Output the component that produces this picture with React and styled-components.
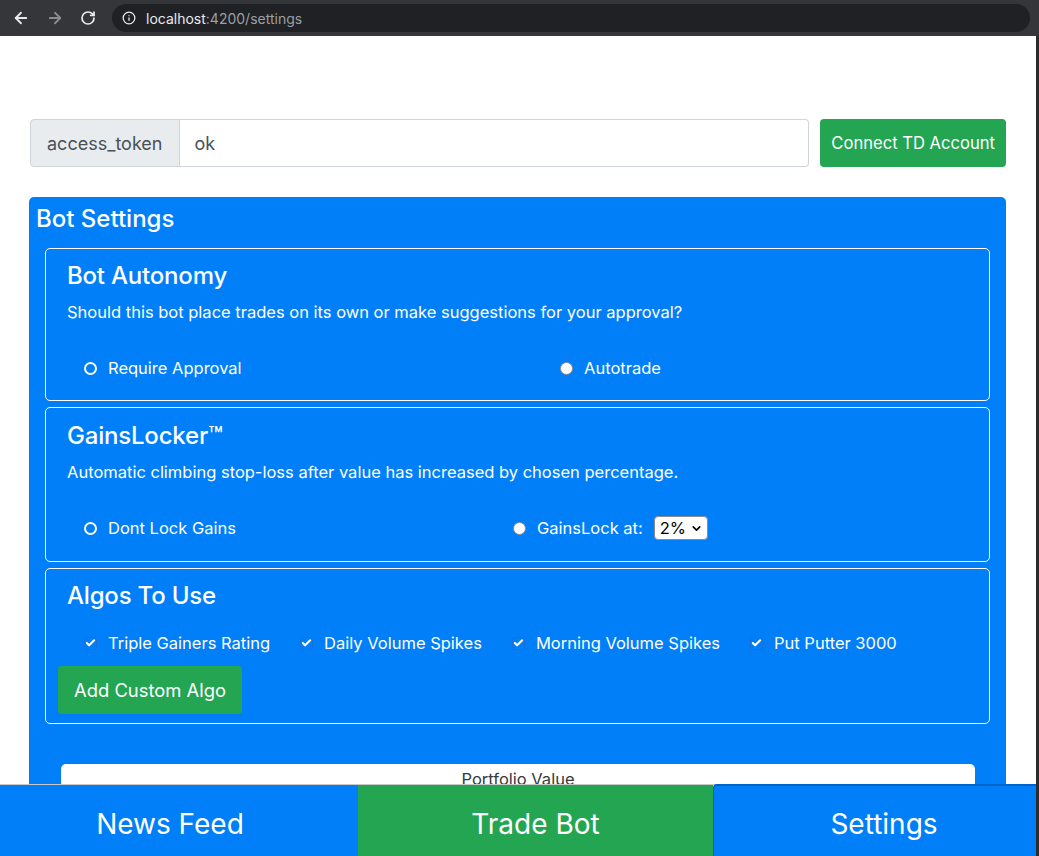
import React from 'react';
import styled, { createGlobalStyle } from 'styled-components';
import { ArrowLeft, ArrowRight, RotateCw, Info, ChevronDown, Check } from 'lucide-react';

const BLUE = '#007ff9';
const GREEN = '#23a552';

const GlobalStyle = createGlobalStyle`
  html, body {
    margin: 0;
    padding: 0;
    height: 100%;
    overflow: hidden;
  }
  body {
    font-family: Inter, "Helvetica Neue", Arial, sans-serif;
    color: #212529;
    background: #fff;
  }
  #root { height: 100%; }
`;

// browser chrome
const Window = styled.div`
  height: 100vh;
  display: flex;
  flex-direction: column;
`;

const Chrome = styled.div`
  height: 36px;
  flex: none;
  background: #35363a;
  display: flex;
  align-items: center;
  padding-left: 12px;
  gap: 16px;
`;

const NavIcon = styled.span`
  display: flex;
  color: ${p => (p.$dim ? '#8a8b8e' : '#e8eaed')};
`;

const UrlPill = styled.div`
  flex: 1;
  height: 28px;
  margin-right: 9px;
  border-radius: 14px;
  background: #202124;
  display: flex;
  align-items: center;
  padding-left: 10px;
  gap: 10px;
  font-size: 14px;
  color: #9aa0a6;
`;

const Host = styled.span`
  color: #e8eaed;
`;

const Viewport = styled.div`
  flex: 1;
  display: flex;
  min-height: 0;
`;

const Page = styled.div`
  flex: 1;
  position: relative;
  overflow: hidden;
`;

const Edge = styled.div`
  width: 3px;
  background: #2b2b2d;
`;

const Container = styled.div`
  padding: 83px 30px 0 29px;
`;

// token input
const InputGroup = styled.div`
  display: flex;
  height: 48px;
  margin-left: 1px;
  font-size: 18px;
`;

const Prepend = styled.div`
  display: flex;
  align-items: center;
  padding: 0 16px;
  background: #e9ecef;
  border: 1px solid #ced4da;
  border-radius: 4px 0 0 4px;
  color: #495057;
`;

const TokenInput = styled.div`
  flex: 1;
  display: flex;
  align-items: center;
  padding: 0 15px;
  border: 1px solid #ced4da;
  border-left: 0;
  border-radius: 0 4px 4px 0;
  color: #495057;
`;

const Button = styled.button`
  border: 0;
  border-radius: 4px;
  background: ${GREEN};
  color: #fff;
  font-family: inherit;
  font-size: ${p => p.$size || 16.6}px;
  padding: 0 ${p => p.$pad || 11}px;
  height: 48px;
  margin-left: ${p => p.$ml || 0}px;
  margin-top: ${p => p.$mt || 0}px;
  align-self: flex-start;
`;

// settings card
const BlueCard = styled.div`
  margin-top: 30px;
  background: ${BLUE};
  border-radius: 5px;
  color: #fff;
  padding-bottom: 40px;
`;

const CardTitle = styled.h3`
  margin: 0;
  padding: 7px 7px 15px;
  font-size: 24px;
  line-height: 29px;
  font-weight: 500;
`;

const CardBody = styled.div`
  padding: 0 16px;
  display: flex;
  flex-direction: column;
  gap: 6px;
`;

const Panel = styled.div`
  border: 1px solid #fff;
  border-radius: 5px;
  padding: ${p => p.$pt || 12}px 12px ${p => p.$pb || 12}px;
  display: flex;
  flex-direction: column;
`;

const PanelTitle = styled.h4`
  margin: 0 10px 10px 9px;
  font-size: 24px;
  line-height: 29px;
  font-weight: 500;
  letter-spacing: -0.2px;
`;

const PanelText = styled.p`
  margin: 0 10px 0 9px;
  font-size: 16.5px;
  line-height: 24px;
`;

const ChoiceRow = styled.div`
  margin: 32px 0 8px;
  padding-left: 26px;
  display: grid;
  grid-template-columns: 351px 351px;
  height: 24px;
`;

const Choice = styled.label`
  display: flex;
  align-items: center;
  justify-content: ${p => (p.$center ? 'center' : 'flex-start')};
  gap: 11px;
  font-size: 16.5px;
`;

const Radio = styled.span`
  width: 13px;
  height: 13px;
  box-sizing: border-box;
  border-radius: 50%;
  flex: none;
  ${p =>
    p.$ring
      ? `border: 2px solid #fff; background: transparent;`
      : `border: 1px solid #8d8d8d; background: #fff;`}
`;

const SelectBox = styled.span`
  display: inline-flex;
  align-items: center;
  gap: 4px;
  height: 24px;
  box-sizing: border-box;
  padding: 0 4px 0 5px;
  background: #fff;
  color: #000;
  border: 1px solid #8d8d8d;
  border-radius: 4px;
  font-size: 16.5px;
`;

const CheckRow = styled.div`
  margin-top: 11px;
  padding-left: 26px;
  display: flex;
  gap: 30px;
  height: 24px;
`;

const CheckItem = styled.label`
  display: flex;
  align-items: center;
  gap: 11px;
  font-size: 16.5px;
`;

const CheckBox = styled.span`
  width: 13px;
  height: 13px;
  box-sizing: border-box;
  border-radius: 3px;
  border: 1px solid #1a70d8;
  background: ${BLUE};
  display: flex;
  align-items: center;
  justify-content: center;
  color: #fff;
`;

const WhiteCard = styled.div`
  margin: 34px 15px 0 16px;
  background: #fff;
  border-radius: 5px;
  color: #343a40;
  text-align: center;
  padding-top: 3px;
  font-size: 16.5px;
  line-height: 24px;
  height: 200px;
`;

// bottom nav
const BottomNav = styled.nav`
  position: absolute;
  left: 0;
  right: 0;
  bottom: 0;
  height: 71px;
  display: grid;
  grid-template-columns: 358px 355px 1fr;
  border-top: 1px solid #c9c9c9;
`;

const NavItem = styled.div`
  display: flex;
  align-items: center;
  justify-content: center;
  padding-top: 6px;
  padding-left: ${p => Math.max(p.$shift || 0, 0) * 2}px;
  padding-right: ${p => Math.max(-(p.$shift || 0), 0) * 2}px;
  box-sizing: border-box;
  background: ${p => (p.$green ? GREEN : BLUE)};
  color: #fff;
  font-size: 28px;
  ${p =>
    p.$active &&
    `border-top: 2px solid #0062cc; border-left: 1px solid #0062cc; border-top-left-radius: 4px; margin-top: -1px;`}
`;

const algos = ['Triple Gainers Rating', 'Daily Volume Spikes', 'Morning Volume Spikes', 'Put Putter 3000'];

export default function App() {
  return (
    <Window>
      <GlobalStyle />
      <Chrome>
        <NavIcon><ArrowLeft size={18} strokeWidth={2.4} /></NavIcon>
        <NavIcon $dim><ArrowRight size={18} strokeWidth={2.4} /></NavIcon>
        <NavIcon><RotateCw size={16} strokeWidth={2.6} /></NavIcon>
        <UrlPill>
          <NavIcon><Info size={14} strokeWidth={2.2} /></NavIcon>
          <span><Host>localhost</Host>:4200/settings</span>
        </UrlPill>
      </Chrome>
      <Viewport>
        <Page>
          <Container>
            <InputGroup>
              <Prepend>access_token</Prepend>
              <TokenInput>ok</TokenInput>
              <Button $ml={11}>Connect TD Account</Button>
            </InputGroup>

            <BlueCard>
              <CardTitle>Bot Settings</CardTitle>
              <CardBody>
                <Panel>
                  <PanelTitle>Bot Autonomy</PanelTitle>
                  <PanelText>Should this bot place trades on its own or make suggestions for your approval?</PanelText>
                  <ChoiceRow>
                    <Choice><Radio $ring />Require Approval</Choice>
                    <Choice $center><Radio />Autotrade</Choice>
                  </ChoiceRow>
                </Panel>

                <Panel $pt={13} $pb={13}>
                  <PanelTitle>GainsLocker™</PanelTitle>
                  <PanelText>Automatic climbing stop-loss after value has increased by chosen percentage.</PanelText>
                  <ChoiceRow>
                    <Choice><Radio $ring />Dont Lock Gains</Choice>
                    <Choice $center>
                      <Radio />GainsLock at:
                      <SelectBox>2%<ChevronDown size={13} strokeWidth={3} /></SelectBox>
                    </Choice>
                  </ChoiceRow>
                </Panel>

                <Panel $pb={9}>
                  <PanelTitle>Algos To Use</PanelTitle>
                  <CheckRow>
                    {algos.map(a => (
                      <CheckItem key={a}>
                        <CheckBox><Check size={12} strokeWidth={4.5} /></CheckBox>
                        {a}
                      </CheckItem>
                    ))}
                  </CheckRow>
                  <Button $size={18.4} $pad={16} $mt={11}>Add Custom Algo</Button>
                </Panel>

                <WhiteCard>Portfolio Value</WhiteCard>
              </CardBody>
            </BlueCard>
          </Container>

          <BottomNav>
            <NavItem $shift={-9}>News Feed</NavItem>
            <NavItem $green>Trade Bot</NavItem>
            <NavItem $active $shift={9}>Settings</NavItem>
          </BottomNav>
        </Page>
        <Edge />
      </Viewport>
    </Window>
  );
}
